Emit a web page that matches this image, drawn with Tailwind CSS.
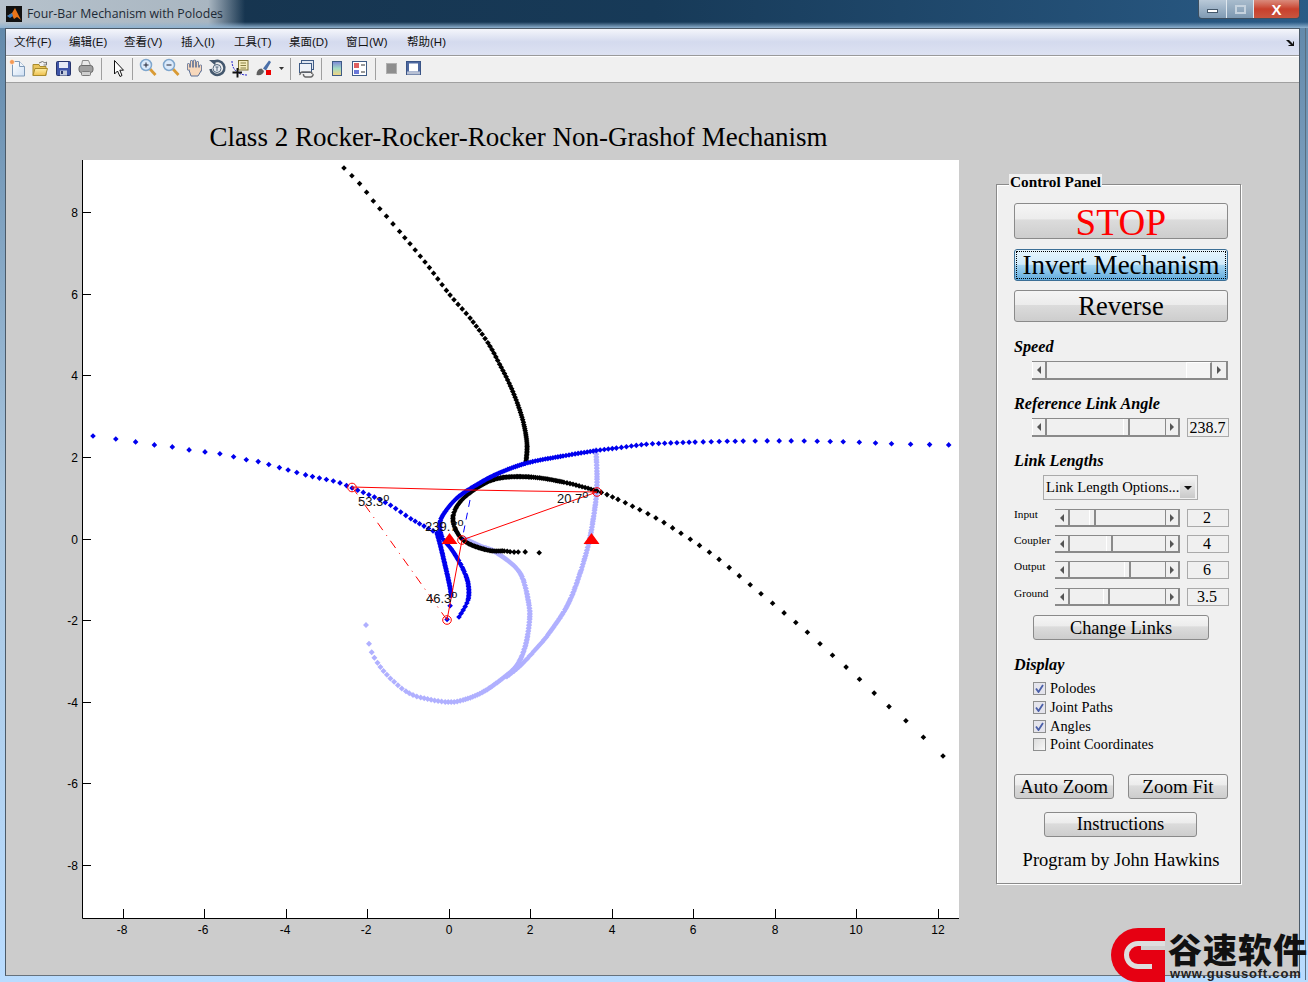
<!doctype html>
<html><head><meta charset="utf-8">
<script src="https://cdn.jsdelivr.net/npm/@tailwindcss/browser@4"></script>
<title>Four-Bar Mechanism with Polodes</title></head>
<body class="m-0 overflow-hidden">
<div class="relative w-[1308px] h-[982px] flex flex-col bg-gradient-to-b from-[#5f86a8] via-[#a9c6df] to-[#b9dcff] overflow-hidden font-['Liberation_Sans',sans-serif]">
  <!-- title bar -->
  <header class="relative h-[28px] shrink-0 flex items-center pl-[6px] gap-[5px] bg-gradient-to-r from-[#16324b] via-[#173a58] to-[#2a5b86]">
    <div class="absolute left-0 top-0 h-[28px] w-[245px] bg-gradient-to-r from-[#b6c2cc] via-[#a9b6c1] via-85% to-transparent"></div>
    <div class="absolute left-0 top-[22px] h-[6px] w-full bg-gradient-to-b from-transparent to-[#8fb2d0]"></div>
    <svg class="relative" width="16" height="16" viewBox="0 0 16 16"><rect width="16" height="16" fill="#111"/><path d="M1 10 L6 7 L9 2 L12 8 L15 14 L11 11 L8 13 L6 9Z" fill="#e8751a"/><path d="M1 10 L6 7 L7 10 L4 12Z" fill="#3a7ec2"/></svg>
    <span class="relative text-[12.300px] text-[#1d2a35] font-['Open_Sans',sans-serif]">Four-Bar Mechanism with Polodes</span>
    <div class="absolute right-[8px] top-0 h-[19px] w-[102px] flex rounded-b-[4px] border border-t-0 border-[#3d4f60] overflow-hidden">
      <div class="w-[28px] flex items-center justify-center bg-gradient-to-b from-[#b9c9d8] to-[#7f9ab3] border-r border-[#dfe7ee]"><div class="w-[11px] h-[4px] mt-[4px] bg-white border border-[#44586b]"></div></div>
      <div class="w-[27px] flex items-center justify-center bg-gradient-to-b from-[#a9bccd] to-[#7d98b1] border-r border-[#dfe7ee]"><div class="w-[11px] h-[9px] border-2 border-[#c5d2de]"></div></div>
      <div class="flex-1 flex items-center justify-center bg-gradient-to-b from-[#d98a7c] via-[#c8402c] to-[#c9553f] text-white font-bold text-[15px] leading-none">X</div>
    </div>
  </header>
  <div class="absolute right-[2px] top-[28px] bottom-[2px] w-px bg-[#5a6f80]"></div>
  <!-- window client -->
  <div class="ml-[5px] mr-[8px] mb-[6px] flex-1 flex flex-col border border-[#4b5a68] border-b-[#66727d] min-h-0">
    <nav class="h-[27px] shrink-0 flex items-center justify-between pt-[1px] pl-[8px] pr-[4px] bg-gradient-to-b from-[#f4f6fb] via-[#d4daee] to-[#dde2f2] border-b border-[#9a9a9a] text-[11.5px] text-[#111] font-['Liberation_Sans','Noto_Sans_CJK_SC',sans-serif]">
      <div class="flex">
        <span class="w-[55px]">文件(F)</span><span class="w-[55px]">编辑(E)</span><span class="w-[57px]">查看(V)</span><span class="w-[53px]">插入(I)</span><span class="w-[55px]">工具(T)</span><span class="w-[57px]">桌面(D)</span><span class="w-[61px]">窗口(W)</span><span>帮助(H)</span>
      </div>
      <svg width="9" height="8" viewBox="0 0 9 8"><path d="M0 1 H3 L7 5 V2 L8 3 V7 H3 L2 6 H5 L2 3Z" fill="#111"/></svg>
    </nav>
    <div class="h-[27px] shrink-0 flex items-center bg-[#f0f0f0] border-t border-white border-b border-b-[#a0a0a0]">
      <svg width="430" height="24" viewBox="6 58 430 24">
        <defs>
          <linearGradient id="sheet" x1="0" y1="0" x2="1" y2="1"><stop offset="0" stop-color="#fff"/><stop offset="1" stop-color="#cfe0f4"/></linearGradient>
          <linearGradient id="fold" x1="0" y1="0" x2="0" y2="1"><stop offset="0" stop-color="#fdeea6"/><stop offset="1" stop-color="#eebf4c"/></linearGradient>
          <linearGradient id="cb" x1="0" y1="0" x2="0" y2="1"><stop offset="0" stop-color="#7c86d8"/><stop offset=".5" stop-color="#a3dbc4"/><stop offset="1" stop-color="#f5d47e"/></linearGradient>
        </defs>
        <!-- new -->
        <path d="M12.500 61.500 h7 l5 5 v9.500 h-12z" fill="url(#sheet)" stroke="#7f9ab8"/><path d="M19.500 61.500 v5 h5" fill="#eef4fb" stroke="#7f9ab8"/><circle cx="12" cy="62" r="2.500" fill="#f59a55" stroke="#fff" stroke-width=".6"/>
        <!-- open -->
        <path d="M33 64.500 h6 l1 2 h6 v9 h-13z" fill="#e9c45a" stroke="#a98b2c"/><path d="M33 75.500 l2 -7 h12.500 l-2 7z" fill="url(#fold)" stroke="#a98b2c"/><path d="M39 63 q4 -3 6 0 l1.500 -1 v3 h-3" fill="none" stroke="#777"/>
        <!-- save -->
        <rect x="56.500" y="61.500" width="14" height="14" rx="1" fill="#3f55a8" stroke="#27356c"/><rect x="59" y="62" width="9" height="6" fill="#e6ebf7"/><rect x="60" y="70.500" width="7" height="5" fill="#c3cbdd"/><rect x="61" y="71" width="2" height="3" fill="#27356c"/>
        <!-- print -->
        <path d="M82.500 60.500 h6 l2 5 h-9z" fill="#e9e9e9" stroke="#8a8a8a"/><rect x="79" y="65.500" width="14" height="7" rx="2.500" fill="#a0a0a0" stroke="#6b6b6b"/><rect x="81.500" y="71.500" width="9" height="4" rx="1" fill="#cfcfcf" stroke="#7b7b7b"/>
        <line x1="101.500" y1="58" x2="101.500" y2="80" stroke="#a0a0a0"/>
        <!-- arrow -->
        <path d="M114.500 60.500 V74 L117.500 71 L120 76.500 L122 75.500 L119.800 70.200 H123.500Z" fill="#fff" stroke="#111"/>
        <line x1="132.500" y1="58" x2="132.500" y2="80" stroke="#a0a0a0"/>
        <!-- zoom in -->
        <line x1="150" y1="69" x2="155.500" y2="75" stroke="#d99a33" stroke-width="2.800"/><circle cx="146" cy="65" r="5.500" fill="#dbeafb" stroke="#7fa6cd" stroke-width="1.500"/><path d="M143.500 65 h5 M146 62.500 v5" stroke="#223" />
        <!-- zoom out -->
        <line x1="173" y1="69" x2="178.500" y2="75" stroke="#d99a33" stroke-width="2.800"/><circle cx="169" cy="65" r="5.500" fill="#dbeafb" stroke="#7fa6cd" stroke-width="1.500"/><path d="M166.500 65 h5" stroke="#223"/>
        <!-- hand -->
        <path d="M188.500 69 V64.500 M191.500 67 V61.500 M194.500 67 V61 M197.500 67 V62.500 M200.500 70 V66" stroke="#5b6f96" stroke-width="3" stroke-linecap="round"/><path d="M188 67 L201 67 L201 71 L198 76 H191 Z" fill="#f7d8bc" stroke="#5b6f96"/><path d="M188.500 69 V64.500 M191.500 68 V61.500 M194.500 68 V61 M197.500 68 V62.500 M200.500 70 V66" stroke="#f7d8bc" stroke-width="1.400" stroke-linecap="round"/>
        <!-- rotate -->
        <path d="M213 62.500 A7 7 0 1 1 210.500 69" fill="none" stroke="#44586e" stroke-width="2.600"/><path d="M209 60 h6.500 v5.500z" fill="#44586e"/><circle cx="217" cy="68.500" r="4" fill="#e6ebf1" stroke="#54697e"/><path d="M215.500 67 h3 M217 67 v4" stroke="#54697e"/>
        <!-- datatip -->
        <rect x="238.500" y="60.500" width="9.500" height="9.500" fill="#f5edbd" stroke="#7c7236"/><path d="M240.500 63 h5.500 M240.500 65.500 h5.500 M240.500 68 h5.500" stroke="#8a8144"/><path d="M232 61 q0 7 5 11 q4 3 10 3" fill="none" stroke="#22c" stroke-dasharray="2 1"/><path d="M232.500 72.500 h9.500 M237.500 68 v9.500" stroke="#111" stroke-width="1.900"/>
        <!-- brush -->
        <path d="M256.500 75 q0 -6 5 -6.500 l2.500 2.500 q-1 5 -7.500 4z" fill="#5e5e5e"/><path d="M263 68.500 l6 -8 l2 1.500 l-5 8.500z" fill="#4a6fa8"/><rect x="266" y="70" width="5" height="5" fill="#e00"/><path d="M279 67 h5 l-2.500 3z" fill="#333"/>
        <line x1="290.500" y1="58" x2="290.500" y2="80" stroke="#a0a0a0"/>
        <!-- link plot -->
        <rect x="301.500" y="60.500" width="12" height="9" fill="#dfe6f1" stroke="#3e5b85"/><rect x="299.500" y="63.500" width="12" height="9" fill="#eef2f8" stroke="#3e5b85"/><path d="M300 75 a2.500 2.500 0 0 1 2.500 -3 h5 M313 74 a2.500 2.500 0 0 1 -2.500 3 h-5 a2.500 2.500 0 0 1 -2 -3 M307 72 h3 a2 2 0 0 1 2 2" fill="none" stroke="#666" stroke-width="1.500"/>
        <line x1="321.500" y1="58" x2="321.500" y2="80" stroke="#a0a0a0"/>
        <!-- colorbar -->
        <rect x="332.500" y="61.500" width="9" height="14" fill="url(#cb)" stroke="#3e5b85"/>
        <!-- legend -->
        <rect x="352.500" y="61.500" width="14" height="14" fill="#fff" stroke="#3e5b85"/><rect x="354" y="63" width="5" height="5" fill="#e06060"/><rect x="354" y="70" width="5" height="4" fill="#6a78d8"/><path d="M361 65 h4 M361 72 h4" stroke="#333"/>
        <line x1="375.500" y1="58" x2="375.500" y2="80" stroke="#a0a0a0"/>
        <!-- hide/show -->
        <rect x="386.500" y="63.500" width="10" height="10" fill="#8e8e8e" stroke="#b0b0b0"/>
        <rect x="406.500" y="61.500" width="14" height="13" fill="#4d68a0" stroke="#3a5486"/><rect x="409" y="63.500" width="9" height="8" fill="#fff"/><rect x="407" y="71.500" width="13" height="3" fill="#b7c0d4"/>
      </svg>
    </div>
    <main class="flex-1 min-h-0 bg-[#cccccc] flex">
      <!-- axes -->
      <div class="w-[990px] shrink-0">
        <svg width="990" height="891" viewBox="6 83 990 891" class="block font-['Liberation_Sans',sans-serif]">
          <text x="518.500" y="146" text-anchor="middle" font-family="Liberation Serif" font-size="27" fill="#000">Class 2 Rocker-Rocker-Rocker Non-Grashof Mechanism</text>
          <rect x="83" y="160" width="876" height="758" fill="#fff"/>
          <path d="M82.500 160 V918.500 H959" fill="none" stroke="#000"/>
          <path d="M83 212.500h8M83 294.500h8M83 375.500h8M83 457.500h8M83 539.500h8M83 620.500h8M83 702.500h8M83 783.500h8M83 865.500h8" stroke="#000"/>
          <path d="M123.500 918v-9M204.500 918v-9M286.500 918v-9M367.500 918v-9M449.500 918v-9M530.500 918v-9M612.500 918v-9M693.500 918v-9M775.500 918v-9M856.500 918v-9M938.500 918v-9" stroke="#000"/>
          <g font-size="12" fill="#000" text-anchor="end">
            <text x="78" y="217">8</text><text x="78" y="299">6</text><text x="78" y="380">4</text><text x="78" y="462">2</text><text x="78" y="544">0</text><text x="78" y="625">-2</text><text x="78" y="707">-4</text><text x="78" y="788">-6</text><text x="78" y="870">-8</text>
          </g>
          <g font-size="12" fill="#000" text-anchor="middle">
            <text x="122" y="934">-8</text><text x="203" y="934">-6</text><text x="285" y="934">-4</text><text x="366" y="934">-2</text><text x="449" y="934">0</text><text x="530" y="934">2</text><text x="612" y="934">4</text><text x="693" y="934">6</text><text x="775" y="934">8</text><text x="856" y="934">10</text><text x="938" y="934">12</text>
          </g>
          <g id="curves"></g>
          <g fill="none" stroke="#f00">
            <path d="M352 487 L430 489 L470 490 L525 491 L597 492 L462 540 L447 620"/>
            <path d="M352 487 L447 620" stroke-dasharray="9 6 1 6"/>
            <circle cx="352" cy="487.500" r="4.300"/><circle cx="597" cy="492" r="4.300"/><circle cx="462" cy="540" r="4.300"/><circle cx="447" cy="620" r="4.300"/>
          </g>
          <path d="M470 500 L462 540" fill="none" stroke="#00f" stroke-dasharray="7 6"/>
          <path d="M449.500 533 L457.500 544 H441.500Z M591.500 533 L599.500 544 H583.500Z" fill="#f00"/>
          <g font-size="13" fill="#111">
            <text x="358" y="506">53.3<tspan dy="-5" font-size="11">o</tspan></text>
            <text x="425" y="531">239.7<tspan dy="-5" font-size="11">o</tspan></text>
            <text x="557" y="503">20.7<tspan dy="-5" font-size="11">o</tspan></text>
            <text x="426" y="603">46.3<tspan dy="-5" font-size="11">o</tspan></text>
          </g>
        </svg>
      </div>
      <!-- control panel -->
      <section class="relative mt-[101px] w-[245px] h-[700px] bg-[#f0f0f0] border border-[#8a8a8a] shadow-[inset_1px_1px_0_#fff,1px_1px_0_#fff] font-['Liberation_Serif',serif] text-black pl-[17px] pr-[12px]">
        <h2 class="absolute left-[12px] top-[-11px] px-[1px] bg-[#f0f0f0] text-[15.300px] leading-[16px] font-bold">Control Panel</h2>
        <div class="pt-[18px] flex flex-col items-start">
          <button class="w-[214px] h-[36px] pb-[3px] rounded-[3px] border border-[#8a8a8a] bg-[linear-gradient(#f5f5f5_0%,#ececec_45%,#dcdcdc_46%,#cdcdcd_100%)] text-[#f00] text-[37px] leading-none tracking-[0.3px]">STOP</button>
          <button class="mt-[10px] w-[214px] h-[32px] rounded-[3px] border border-[#3c6f96] bg-[linear-gradient(#e8f6fd_0%,#cfeafa_48%,#a5d6f3_50%,#62abdc_100%)] outline-1 outline-dotted outline-black outline-offset-[-3px] text-[27px] leading-none">Invert Mechanism</button>
          <button class="mt-[9px] w-[214px] h-[32px] pt-[1px] rounded-[3px] border border-[#8a8a8a] bg-[linear-gradient(#f5f5f5_0%,#ececec_45%,#dcdcdc_46%,#cdcdcd_100%)] text-[26.500px] leading-none">Reverse</button>

          <h3 class="mt-[16px] h-[18px] text-[16.200px] leading-[18px] font-bold italic">Speed</h3>
          <!-- speed -->
          <div class="mt-[5px] ml-[18px] w-[196px] h-[19px] flex bg-[#f0f0f0] border-t border-b-2 border-[#8a8a8a]">
            <div class="w-[15px] flex items-center justify-center border-r-2 border-[#8a8a8a] border-l border-l-white"><div class="w-0 h-0 border-y-[4px] border-y-transparent border-r-[4px] border-r-[#555]"></div></div>
            <div class="w-[139px]"></div>
            <div class="w-[26px] bg-[#f4f4f4] border-l border-l-white border-t border-t-white border-r-2 border-r-[#8a8a8a]"></div>
            <div class="flex-1 flex items-center justify-center border-r-2 border-[#8a8a8a]"><div class="w-0 h-0 border-y-[4px] border-y-transparent border-l-[4px] border-l-[#555]"></div></div>
          </div>

          <h3 class="mt-[15px] h-[18px] text-[16.200px] leading-[18px] font-bold italic">Reference Link Angle</h3>
          <div class="mt-[5px] ml-[18px] flex gap-[7px]">
            <div class="w-[148px] h-[19px] flex border-t border-b-2 border-[#8a8a8a]">
              <div class="w-[15px] flex items-center justify-center border-r-2 border-[#8a8a8a] border-l border-l-white"><div class="w-0 h-0 border-y-[4px] border-y-transparent border-r-[4px] border-r-[#555]"></div></div>
              <div class="w-[76px]"></div>
              <div class="w-[7px] border-l border-white border-r-2 border-r-[#8a8a8a]"></div>
              <div class="flex-1"></div>
              <div class="w-[15px] flex items-center justify-center border-l border-[#8a8a8a] border-r-2"><div class="w-0 h-0 border-y-[4px] border-y-transparent border-l-[4px] border-l-[#555]"></div></div>
            </div>
            <div class="w-[42px] h-[19px] pr-[1px] border border-[#aaa] flex items-center justify-center text-[16px] leading-none">238.7</div>
          </div>

          <h3 class="mt-[15px] h-[18px] text-[16.200px] leading-[18px] font-bold italic">Link Lengths</h3>
          <div class="mt-[5px] ml-[29px] w-[155px] h-[25px] border border-[#aaa] flex items-center justify-between pl-[2px] pr-[2px] text-[14.600px] whitespace-nowrap">
            <span>Link Length Options...</span>
            <div class="w-[15px] h-[21px] bg-gradient-to-b from-[#f4f4f4] to-[#c9c9c9] flex items-center justify-center"><div class="w-0 h-0 border-x-[4px] border-x-transparent border-t-[4px] border-t-[#111]"></div></div>
          </div>

          <!-- link rows -->
          <div class="mt-[9px] flex">
            <span class="w-[41px] text-[11.300px] leading-[12px] -mt-[1px]">Input</span>
            <div class="w-[125px] h-[18px] flex border-t border-b-2 border-[#8a8a8a]">
              <div class="w-[15px] flex items-center justify-center border-r-2 border-[#8a8a8a]"><div class="w-0 h-0 border-y-[4px] border-y-transparent border-r-[4px] border-r-[#555]"></div></div>
              <div class="w-[19px]"></div><div class="w-[7px] border-l border-white border-r-2 border-r-[#8a8a8a]"></div><div class="flex-1"></div>
              <div class="w-[15px] flex items-center justify-center border-l border-[#8a8a8a] border-r-2"><div class="w-0 h-0 border-y-[4px] border-y-transparent border-l-[4px] border-l-[#555]"></div></div>
            </div>
            <div class="ml-[7px] w-[42px] h-[18px] pr-[2px] pb-[1px] border border-[#aaa] flex items-center justify-center text-[16px] leading-none">2</div>
          </div>
          <div class="mt-[8px] flex">
            <span class="w-[41px] text-[11.300px] leading-[12px] -mt-[1px]">Coupler</span>
            <div class="w-[125px] h-[18px] flex border-t border-b-2 border-[#8a8a8a]">
              <div class="w-[15px] flex items-center justify-center border-r-2 border-[#8a8a8a]"><div class="w-0 h-0 border-y-[4px] border-y-transparent border-r-[4px] border-r-[#555]"></div></div>
              <div class="w-[36px]"></div><div class="w-[7px] border-l border-white border-r-2 border-r-[#8a8a8a]"></div><div class="flex-1"></div>
              <div class="w-[15px] flex items-center justify-center border-l border-[#8a8a8a] border-r-2"><div class="w-0 h-0 border-y-[4px] border-y-transparent border-l-[4px] border-l-[#555]"></div></div>
            </div>
            <div class="ml-[7px] w-[42px] h-[18px] pr-[2px] border border-[#aaa] flex items-center justify-center text-[16px] leading-none">4</div>
          </div>
          <div class="mt-[8px] flex">
            <span class="w-[41px] text-[11.300px] leading-[12px] -mt-[1px]">Output</span>
            <div class="w-[125px] h-[18px] flex border-t border-b-2 border-[#8a8a8a]">
              <div class="w-[15px] flex items-center justify-center border-r-2 border-[#8a8a8a]"><div class="w-0 h-0 border-y-[4px] border-y-transparent border-r-[4px] border-r-[#555]"></div></div>
              <div class="w-[54px]"></div><div class="w-[7px] border-l border-white border-r-2 border-r-[#8a8a8a]"></div><div class="flex-1"></div>
              <div class="w-[15px] flex items-center justify-center border-l border-[#8a8a8a] border-r-2"><div class="w-0 h-0 border-y-[4px] border-y-transparent border-l-[4px] border-l-[#555]"></div></div>
            </div>
            <div class="ml-[7px] w-[42px] h-[18px] pr-[2px] border border-[#aaa] flex items-center justify-center text-[16px] leading-none">6</div>
          </div>
          <div class="mt-[9px] flex">
            <span class="w-[41px] text-[11.300px] leading-[12px] -mt-[1px]">Ground</span>
            <div class="w-[125px] h-[18px] flex border-t border-b-2 border-[#8a8a8a]">
              <div class="w-[15px] flex items-center justify-center border-r-2 border-[#8a8a8a]"><div class="w-0 h-0 border-y-[4px] border-y-transparent border-r-[4px] border-r-[#555]"></div></div>
              <div class="w-[33px]"></div><div class="w-[7px] border-l border-white border-r-2 border-r-[#8a8a8a]"></div><div class="flex-1"></div>
              <div class="w-[15px] flex items-center justify-center border-l border-[#8a8a8a] border-r-2"><div class="w-0 h-0 border-y-[4px] border-y-transparent border-l-[4px] border-l-[#555]"></div></div>
            </div>
            <div class="ml-[7px] w-[42px] h-[18px] pr-[2px] border border-[#aaa] flex items-center justify-center text-[16px] leading-none">3.5</div>
          </div>

          <button class="mt-[9px] ml-[19px] w-[176px] h-[25px] pt-[1px] rounded-[3px] border border-[#8a8a8a] bg-[linear-gradient(#f5f5f5_0%,#ececec_45%,#dcdcdc_46%,#cdcdcd_100%)] text-[18.300px] leading-none">Change Links</button>

          <h3 class="mt-[16px] h-[18px] text-[16.200px] leading-[18px] font-bold italic">Display</h3>
          <ul class="mt-[5px] ml-[19px] flex flex-col text-[14.400px] leading-[19px]">
            <li class="flex items-center gap-[4px] h-[19px]"><span class="w-[13px] h-[13px] border border-[#8e8f8f] bg-[#e4e4ec] flex items-center justify-center"><svg width="9" height="9" viewBox="0 0 9 9"><path d="M1 4.500 L3.500 8 L8 1" fill="none" stroke="#4a5fa8" stroke-width="1.800"/></svg></span>Polodes</li>
            <li class="flex items-center gap-[4px] h-[19px]"><span class="w-[13px] h-[13px] border border-[#8e8f8f] bg-[#e4e4ec] flex items-center justify-center"><svg width="9" height="9" viewBox="0 0 9 9"><path d="M1 4.500 L3.500 8 L8 1" fill="none" stroke="#4a5fa8" stroke-width="1.800"/></svg></span>Joint Paths</li>
            <li class="flex items-center gap-[4px] h-[19px]"><span class="w-[13px] h-[13px] border border-[#8e8f8f] bg-[#e4e4ec] flex items-center justify-center"><svg width="9" height="9" viewBox="0 0 9 9"><path d="M1 4.500 L3.500 8 L8 1" fill="none" stroke="#4a5fa8" stroke-width="1.800"/></svg></span>Angles</li>
            <li class="flex items-center gap-[4px] h-[19px] -mt-[1px]"><span class="w-[13px] h-[13px] border border-[#8e8f8f] bg-gradient-to-br from-[#dcdcdc] to-[#f8f8f8]"></span>Point Coordinates</li>
          </ul>

          <div class="mt-[20px] flex gap-[14px]">
            <button class="w-[100px] h-[25px] rounded-[3px] border border-[#8a8a8a] bg-[linear-gradient(#f5f5f5_0%,#ececec_45%,#dcdcdc_46%,#cdcdcd_100%)] text-[19px] leading-none">Auto Zoom</button>
            <button class="w-[100px] h-[25px] rounded-[3px] border border-[#8a8a8a] bg-[linear-gradient(#f5f5f5_0%,#ececec_45%,#dcdcdc_46%,#cdcdcd_100%)] text-[19px] leading-none">Zoom Fit</button>
          </div>
          <button class="mt-[13px] ml-[30px] w-[153px] h-[25px] rounded-[3px] border border-[#8a8a8a] bg-[linear-gradient(#f5f5f5_0%,#ececec_45%,#dcdcdc_46%,#cdcdcd_100%)] text-[18.500px] leading-none">Instructions</button>
          <p class="mt-[12px] w-[214px] text-center text-[18.500px] leading-[22px] whitespace-nowrap">Program by John Hawkins</p>
        </div>
      </section>
    </main>
  </div>
  <!-- watermark -->
  <div class="absolute left-[1111px] top-[928px] w-[197px] h-[54px] flex">
    <svg width="54" height="54" viewBox="0 0 54 54" class="shrink-0"><path d="M54 0 H27 A27 27 0 0 0 27 54 H54 Z" fill="#e60012"/><path d="M54 15.500 H27 A11.500 11.500 0 0 0 27 38.500 H41" fill="none" stroke="#dedede" stroke-width="5"/><path d="M30 18 V22 H54 V18Z" fill="#cfcfcf"/></svg>
    <div class="flex flex-col ml-[3px] pt-[3px] overflow-hidden">
      <span class="text-[34px] leading-[36px] font-black text-[#111] font-['Noto_Sans_CJK_SC',sans-serif] whitespace-nowrap tracking-[1px]">谷速软件</span>
      <span class="ml-[2px] text-[13px] leading-[14px] font-bold text-[#222] tracking-[0.8px] font-['Liberation_Sans',sans-serif] whitespace-nowrap">www.gususoft.com</span>
    </div>
  </div>
</div>
<script>
const NS='http://www.w3.org/2000/svg';
const g=document.getElementById('curves');
function cr(p,t){const n=p.length-1;const s=Math.min(Math.floor(t),n-1),u=t-s;
 const a=p[Math.max(s-1,0)],b=p[s],c=p[s+1],d=p[Math.min(s+2,n)];
 return [0,1].map(i=>0.5*((2*b[i])+(c[i]-a[i])*u+(2*a[i]-5*b[i]+4*c[i]-d[i])*u*u+(3*b[i]-a[i]-3*c[i]+d[i])*u*u*u));}
function draw(p,color,r){
 let last=null,tot=0,d='';
 for(let t=0;t<=p.length-1;t+=0.004){
  const q=cr(p,t);const sp=p[Math.min(Math.floor(t),p.length-1)][2];
  if(last){tot+=Math.hypot(q[0]-last[0],q[1]-last[1]);}
  last=q;
  if(tot>=sp||t===0){tot=0;d+=`M${q[0].toFixed(1)} ${(q[1]-r).toFixed(1)}l${r} ${r}l${-r} ${r}l${-r} ${-r}z`;}
 }
 const e=document.createElementNS(NS,'path');e.setAttribute('d',d);e.setAttribute('fill',color);g.appendChild(e);
}
const lb=[[366,625,19],[369,644,9],[372,653,6],[379,665,5],[390,678,5],[407,692,4],[423,698,3.5],[447,702,3],[463,700,2.500],[483,692,2],[503,678,2],[517,665,1.500],[525,647,1.500],[529,625,1.500],[529,605,1.500],[520,573,1.500],[497,553,1.500],[480,546,1.500],[463,538,1.500]];
const lb2=[[596,450,1.500],[597,480,1.500],[595,507,1.500],[587,550,1.500],[570,600,1.500],[550,632,2],[535,650,3],[520,666,3],[505,678,3]];
draw(lb,'#b0b0ff',3);draw(lb2,'#b0b0ff',3);
const bl1=[[344,168,11],[360,184,11],[375,203,10],[400,232,8],[425,262,7],[450,295,6],[470,318,5],[488,343,4],[500,365,3.500],[510,385,3],[518,405,2.500],[524,425,2],[527,445,1.500],[526,463,1.500]];
const bl2=[[943,756,27],[922,736,24],[904,719,22],[886,704,20],[856,676,18],[829,652,17],[806,631,15],[783,612,15],[759,592,14],[737,574,13],[716,557,12],[696,543,11],[676,530,10],[656,518,9],[636,508,8],[617,499,6],[597,491,3],[563,482,2],[530,477,1.500],[500,478,1.500],[480,486,1.500],[460,502,1.500],[453,520,1.500],[463,540,1.500],[487,550,2],[505,551,3],[512,552,4],[521,552,7],[528.500,552,14],[543,553,14]];
draw(bl1,'#000',2.800);draw(bl2,'#000',2.800);
const b1=[[93,436,23],[116,439,20],[136,442,19],[155,445,18],[173,447,17],[190,450,16],[206,452,15],[221,454,14],[235,457,13],[248,460,12],[260,462,11],[281,468,9],[310,476,7],[337,482,7],[352,488,6],[372,496,6],[390,505,6],[413,520,5],[437,533,3]];
const b1b=[[437,533,1.500],[441,548,1.500],[445,565,1.500],[450,587,1.500],[451,596,10],[450,606,14],[447,620,14]];
const b2=[[459,617,4],[468,600,1.500],[468,583,1.500],[462,567,1.500],[452,550,1.500],[442,537,1.500],[440,523,1.500],[445,512,1.500],[457,498,1.500],[473,487,1.500],[497,474,2],[527,463,2.500],[563,456,3],[597,450.500,4],[617,448,5],[650,444,6],[700,442,8],[750,441,12],[800,441,13],[850,442,16],[900,444,19],[955,445,23]];
draw(b1,'#0000ee',2.800);draw(b1b,'#0000ee',2.800);draw(b2,'#0000ee',2.800);
</script>
</body></html>
